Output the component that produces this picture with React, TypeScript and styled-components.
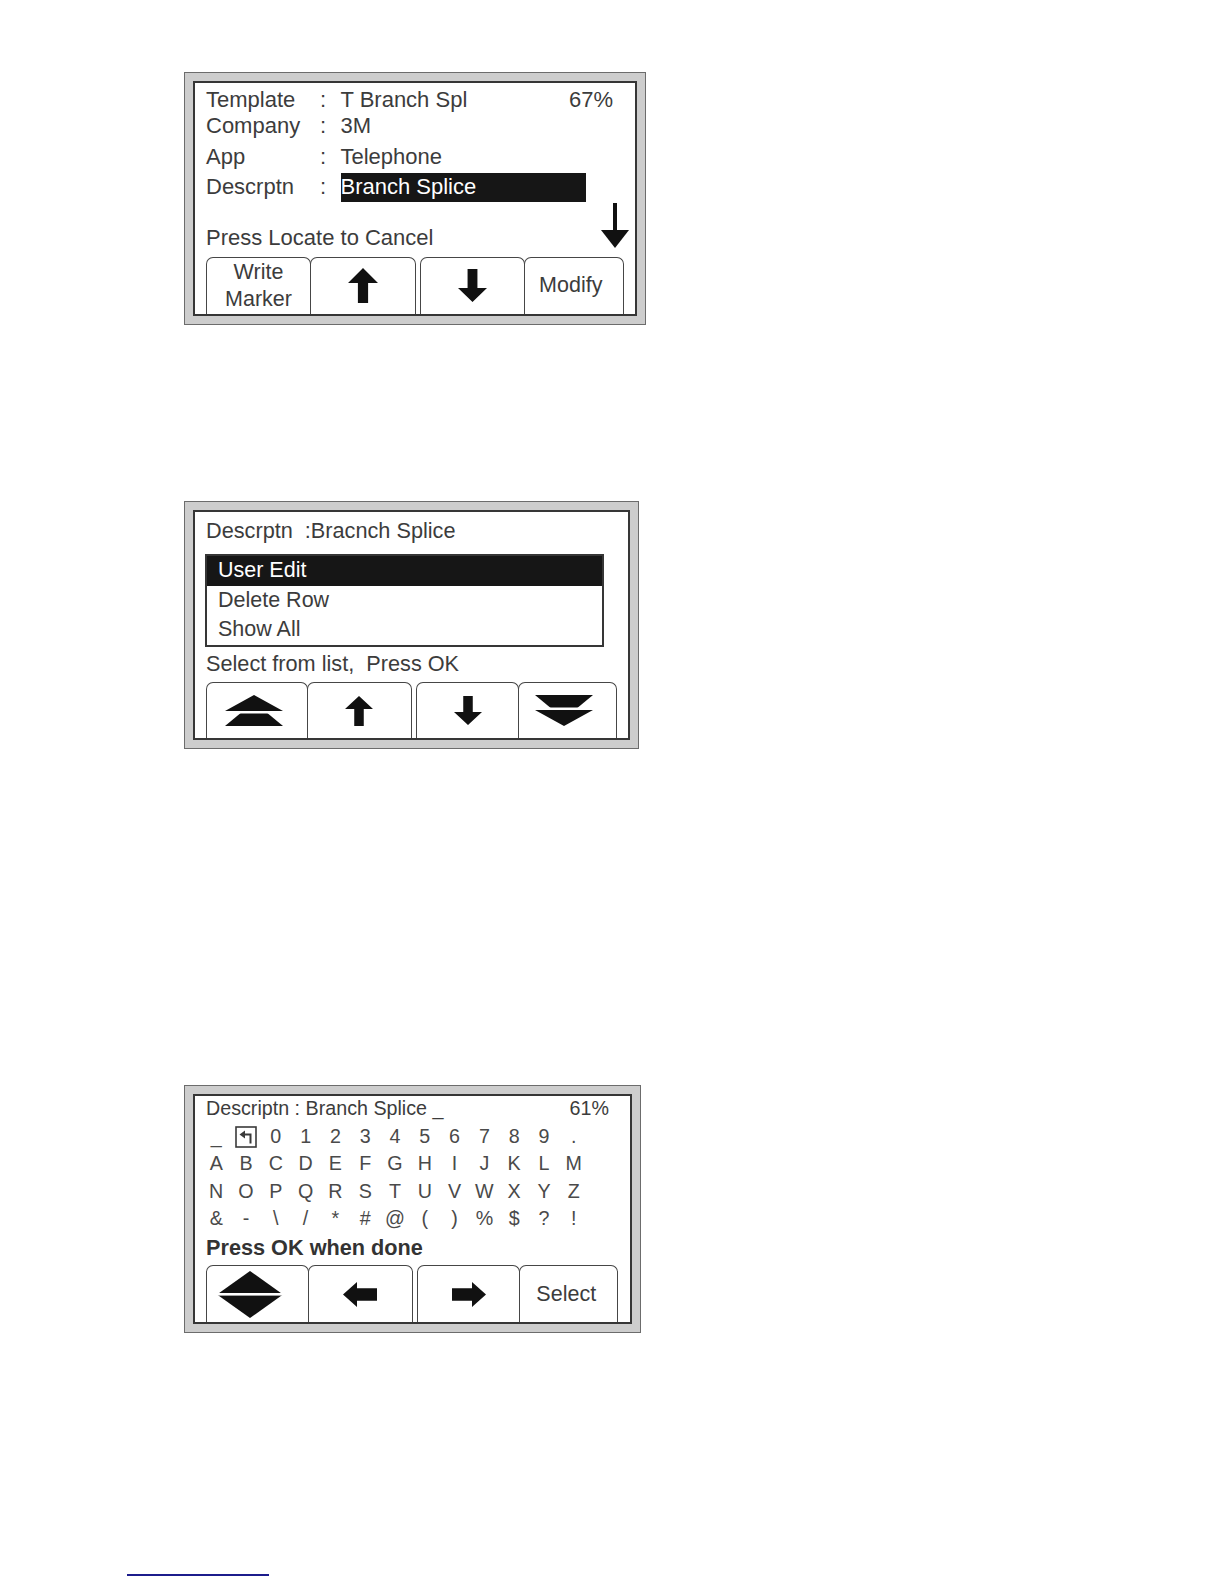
import React from "react";
import styled, { createGlobalStyle } from "styled-components";

const GlobalStyle = createGlobalStyle`
  body {
    margin: 0;
    background: #fff;
    font-family: "Liberation Sans", Arial, sans-serif;
  }
`;

const Page = styled.div`
  width: 1224px;
  height: 1584px;
  box-sizing: border-box;
  padding: 72px 0 0 184px;
  display: flex;
  flex-direction: column;
  align-items: flex-start;
`;

const Frame = styled.div<{ $w: number; $h: number; $top?: number }>`
  width: ${(p) => p.$w}px;
  height: ${(p) => p.$h}px;
  margin-top: ${(p) => p.$top ?? 0}px;
  box-sizing: border-box;
  border: 1px solid #6c6c6c;
  background: #cdcdcd;
  padding: 8px;
`;

const Screen = styled.div`
  height: 100%;
  box-sizing: border-box;
  border: 2px solid #363636;
  background: #fff;
  display: flex;
  flex-direction: column;
  padding-left: 11px;
  color: #3c3c3c;
  overflow: hidden;
`;

/* ---------- screen 1 ---------- */

const FieldRow = styled.div<{ $h: number; $top?: number }>`
  display: flex;
  align-items: center;
  height: ${(p) => p.$h}px;
  margin-top: ${(p) => p.$top ?? 0}px;
  padding-right: 22px;
  font-size: 22px;
`;

const Label = styled.span`
  width: 113px;
`;

const Colon = styled.span`
  width: 8px;
  text-align: center;
`;

const Value = styled.span<{ $hl?: boolean }>`
  margin-left: 13.5px;
  flex: ${(p) => (p.$hl ? "none" : "1")};
  ${(p) =>
    p.$hl &&
    `
    width: 245px;
    height: 28.5px;
    line-height: 28.5px;
    background: #161616;
    color: #fff;
    margin-top: 1.5px;
  `}
`;

const Percent = styled.span`
  font-size: 22px;
`;

const PromptRow = styled.div`
  display: flex;
  justify-content: space-between;
  align-items: flex-end;
  height: 47px;
  margin-top: 2px;
  padding-right: 6px;
  font-size: 22px;
  line-height: 26px;

  svg {
    margin-bottom: 2.5px;
  }
`;

/* ---------- soft keys ---------- */

const TabBar = styled.div`
  margin-top: auto;
  display: flex;
  gap: 4px;
`;

const Pair = styled.div`
  display: flex;
`;

const Tab = styled.div<{ $w: number; $h: number; $nudge?: number }>`
  width: ${(p) => p.$w}px;
  height: ${(p) => p.$h}px;
  box-sizing: border-box;
  padding-right: ${(p) => p.$nudge ?? 0}px;
  border: 1.5px solid #464646;
  border-bottom: none;
  border-radius: 7px 7px 0 0;
  display: flex;
  align-items: center;
  justify-content: center;
  text-align: center;
  font-size: 21.5px;
  line-height: 27px;
  color: #3c3c3c;

  & + & {
    margin-left: -1.5px;
  }
`;

/* ---------- screen 2 ---------- */

const Header = styled.div<{ $size: number; $h: number; $top?: number }>`
  display: flex;
  justify-content: space-between;
  align-items: center;
  height: ${(p) => p.$h}px;
  margin-top: ${(p) => p.$top ?? 0}px;
  padding-right: 21px;
  font-size: ${(p) => p.$size}px;
  white-space: pre;
`;

const ListBox = styled.div`
  width: 399px;
  box-sizing: border-box;
  margin: 10px 0 0 -1px;
  border: 2px solid #363636;
`;

const ListItem = styled.div<{ $active?: boolean }>`
  height: 29.5px;
  line-height: 29.5px;
  padding-left: 11px;
  font-size: 21.5px;
  background: ${(p) => (p.$active ? "#161616" : "transparent")};
  color: ${(p) => (p.$active ? "#fff" : "#3c3c3c")};
`;

/* ---------- screen 3 ---------- */

const CharGrid = styled.div`
  display: grid;
  grid-template-columns: repeat(13, 29.8px);
  grid-auto-rows: 27.3px;
  margin: 2.7px 0 0 -4.7px;
  font-size: 19.7px;
  color: #4a4a4a;
`;

const CharCell = styled.span`
  display: flex;
  align-items: center;
  justify-content: center;
`;

const BoldPrompt = styled.div`
  height: 26px;
  line-height: 26px;
  margin-top: 2.5px;
  font-size: 21.7px;
  font-weight: bold;
  color: #333;
`;

const FootLine = styled.div`
  width: 142px;
  height: 2px;
  margin: 241px 0 0 -57px;
  background: #1c1c8c;
`;

/* ---------- icons ---------- */

type Dir = "up" | "down" | "left" | "right";

const Arrow = ({ dir, w, h, head }: { dir: Dir; w: number; h: number; head: number }) => {
  let pts: string;
  let flip = false;
  if (dir === "up" || dir === "down") {
    const s = w * 0.34;
    const x1 = (w - s) / 2;
    const x2 = x1 + s;
    pts = `${w / 2},0 ${w},${head} ${x2},${head} ${x2},${h} ${x1},${h} ${x1},${head} 0,${head}`;
    flip = dir === "down";
  } else {
    const s = h * 0.5;
    const y1 = (h - s) / 2;
    const y2 = y1 + s;
    pts = `0,${h / 2} ${head},0 ${head},${y1} ${w},${y1} ${w},${y2} ${head},${y2} ${head},${h}`;
    flip = dir === "right";
  }
  return (
    <svg width={w} height={h} viewBox={`0 0 ${w} ${h}`}>
      <polygon points={pts} fill="#111" transform={flip ? `rotate(180 ${w / 2} ${h / 2})` : undefined} />
    </svg>
  );
};

const DoubleArrow = ({ down }: { down?: boolean }) => (
  <svg width="58" height="31" viewBox="0 0 58 31">
    <g transform={down ? "rotate(180 29 15.5)" : undefined}>
      <polygon points="0,31 29,7 58,31" fill="#111" />
      <polygon points="-3,18.5 29,-3 61,18.5" fill="#fff" />
      <polygon points="0,16 29,0 58,16" fill="#111" />
    </g>
  </svg>
);

const Diamond = () => (
  <svg width="66" height="47" viewBox="0 0 66 47">
    <polygon points="33,0 66,23.5 33,47 0,23.5" fill="#111" />
    <rect x="0" y="22" width="66" height="2.6" fill="#fff" />
  </svg>
);

const ThinDown = () => (
  <svg width="28" height="45" viewBox="0 0 28 45">
    <rect x="12" y="0" width="4" height="29" fill="#111" />
    <polygon points="0,27 28,27 14,45" fill="#111" />
  </svg>
);

const ReturnKey = () => (
  <svg width="22" height="22" viewBox="0 0 22 22">
    <rect x="1" y="1" width="20" height="20" fill="none" stroke="#3a3a3a" strokeWidth="1.6" />
    <polygon points="4.5,8.5 10,4.5 10,12.5" fill="#3a3a3a" />
    <polyline points="9,8.5 15.5,8.5 15.5,17.5" fill="none" stroke="#3a3a3a" strokeWidth="2" />
  </svg>
);

const charRows: string[][] = [
  ["_", "RET", "0", "1", "2", "3", "4", "5", "6", "7", "8", "9", "."],
  "ABCDEFGHIJKLM".split(""),
  "NOPQRSTUVWXYZ".split(""),
  ["&", "-", "\\", "/", "*", "#", "@", "(", ")", "%", "$", "?", "!"],
];

export default function App() {
  return (
    <>
      <GlobalStyle />
      <Page>
        <Frame $w={462} $h={253}>
          <Screen>
            <FieldRow $h={26} $top={4}>
              <Label>Template</Label>
              <Colon>:</Colon>
              <Value>T Branch Spl</Value>
              <Percent>67%</Percent>
            </FieldRow>
            <FieldRow $h={26}>
              <Label>Company</Label>
              <Colon>:</Colon>
              <Value>3M</Value>
            </FieldRow>
            <FieldRow $h={30} $top={2.6}>
              <Label>App</Label>
              <Colon>:</Colon>
              <Value>Telephone</Value>
            </FieldRow>
            <FieldRow $h={30}>
              <Label>Descrptn</Label>
              <Colon>:</Colon>
              <Value $hl>Branch Splice</Value>
            </FieldRow>
            <PromptRow>
              <span>Press Locate to Cancel</span>
              <ThinDown />
            </PromptRow>
            <TabBar>
              <Pair>
                <Tab $w={105} $h={57.4}>
                  Write
                  <br />
                  Marker
                </Tab>
                <Tab $w={106.5} $h={57.4}>
                  <Arrow dir="up" w={30} h={35} head={15} />
                </Tab>
              </Pair>
              <Pair>
                <Tab $w={105} $h={57.4}>
                  <Arrow dir="down" w={29} h={33} head={14} />
                </Tab>
                <Tab $w={100.5} $h={57.4} $nudge={6}>
                  Modify
                </Tab>
              </Pair>
            </TabBar>
          </Screen>
        </Frame>

        <Frame $w={455} $h={248} $top={176}>
          <Screen>
            <Header $size={21.7} $h={26} $top={6}>
              <span>{"Descrptn  :Bracnch Splice"}</span>
            </Header>
            <ListBox>
              <ListItem $active>User Edit</ListItem>
              <ListItem>Delete Row</ListItem>
              <ListItem>Show All</ListItem>
            </ListBox>
            <Header $size={21.7} $h={26} $top={4.3}>
              <span>{"Select from list,  Press OK"}</span>
            </Header>
            <TabBar>
              <Pair>
                <Tab $w={102} $h={56} $nudge={6}>
                  <DoubleArrow />
                </Tab>
                <Tab $w={105.5} $h={56}>
                  <Arrow dir="up" w={28} h={30} head={13} />
                </Tab>
              </Pair>
              <Pair>
                <Tab $w={103} $h={56}>
                  <Arrow dir="down" w={28} h={29} head={13} />
                </Tab>
                <Tab $w={99.5} $h={56} $nudge={7}>
                  <DoubleArrow down />
                </Tab>
              </Pair>
            </TabBar>
          </Screen>
        </Frame>

        <Frame $w={457} $h={248} $top={336}>
          <Screen>
            <Header $size={19.7} $h={24} $top={0.3}>
              <span>{"Descriptn : Branch Splice _"}</span>
              <span>61%</span>
            </Header>
            <CharGrid>
              {charRows.flat().map((c, i) => (
                <CharCell key={i}>{c === "RET" ? <ReturnKey /> : c}</CharCell>
              ))}
            </CharGrid>
            <BoldPrompt>Press OK when done</BoldPrompt>
            <TabBar>
              <Pair>
                <Tab $w={103} $h={57} $nudge={16}>
                  <Diamond />
                </Tab>
                <Tab $w={105.5} $h={57}>
                  <Arrow dir="left" w={34} h={25} head={14} />
                </Tab>
              </Pair>
              <Pair>
                <Tab $w={103} $h={57}>
                  <Arrow dir="right" w={34} h={25} head={14} />
                </Tab>
                <Tab $w={99.5} $h={57} $nudge={4}>
                  Select
                </Tab>
              </Pair>
            </TabBar>
          </Screen>
        </Frame>

        <FootLine />
      </Page>
    </>
  );
}
